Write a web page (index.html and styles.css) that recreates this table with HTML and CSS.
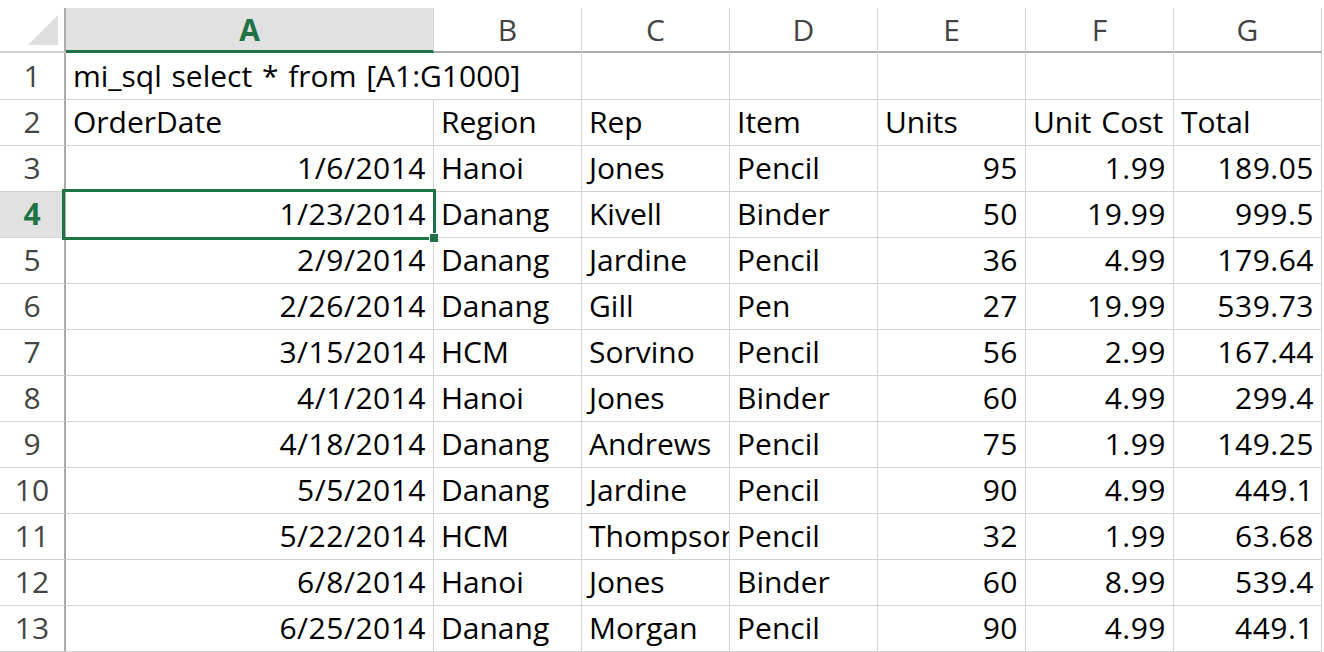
FILE: index.html
```html
<!DOCTYPE html>
<html>
<head>
<meta charset="utf-8">
<link rel="stylesheet" href="styles.css">
<title>Sheet</title>
</head>
<body>
<div class="sheet">
  <div class="corner"><svg class="tri" width="30" height="30" viewBox="0 0 30 30"><polygon points="30,0 30,30 0,30" fill="#dfdfdf"/></svg></div>
  <div class="ch sel-col">A</div>
  <div class="ch">B</div>
  <div class="ch">C</div>
  <div class="ch">D</div>
  <div class="ch">E</div>
  <div class="ch">F</div>
  <div class="ch">G</div>

  <div class="rh">1</div>
  <div class="c spill">mi_sql select * from [A1:G1000]</div>
  <div class="c"></div><div class="c"></div><div class="c"></div><div class="c"></div><div class="c"></div><div class="c"></div>

  <div class="rh">2</div>
  <div class="c">OrderDate</div><div class="c">Region</div><div class="c">Rep</div><div class="c">Item</div><div class="c">Units</div><div class="c">Unit Cost</div><div class="c">Total</div>

  <div class="rh">3</div>
  <div class="c r">1/6/2014</div><div class="c">Hanoi</div><div class="c">Jones</div><div class="c">Pencil</div><div class="c r">95</div><div class="c r">1.99</div><div class="c r">189.05</div>

  <div class="rh sel-row">4</div>
  <div class="c r active">1/23/2014<span class="selbox"></span><span class="handle"></span></div><div class="c">Danang</div><div class="c">Kivell</div><div class="c">Binder</div><div class="c r">50</div><div class="c r">19.99</div><div class="c r">999.5</div>

  <div class="rh">5</div>
  <div class="c r">2/9/2014</div><div class="c">Danang</div><div class="c">Jardine</div><div class="c">Pencil</div><div class="c r">36</div><div class="c r">4.99</div><div class="c r">179.64</div>

  <div class="rh">6</div>
  <div class="c r">2/26/2014</div><div class="c">Danang</div><div class="c">Gill</div><div class="c">Pen</div><div class="c r">27</div><div class="c r">19.99</div><div class="c r">539.73</div>

  <div class="rh">7</div>
  <div class="c r">3/15/2014</div><div class="c">HCM</div><div class="c">Sorvino</div><div class="c">Pencil</div><div class="c r">56</div><div class="c r">2.99</div><div class="c r">167.44</div>

  <div class="rh">8</div>
  <div class="c r">4/1/2014</div><div class="c">Hanoi</div><div class="c">Jones</div><div class="c">Binder</div><div class="c r">60</div><div class="c r">4.99</div><div class="c r">299.4</div>

  <div class="rh">9</div>
  <div class="c r">4/18/2014</div><div class="c">Danang</div><div class="c">Andrews</div><div class="c">Pencil</div><div class="c r">75</div><div class="c r">1.99</div><div class="c r">149.25</div>

  <div class="rh">10</div>
  <div class="c r">5/5/2014</div><div class="c">Danang</div><div class="c">Jardine</div><div class="c">Pencil</div><div class="c r">90</div><div class="c r">4.99</div><div class="c r">449.1</div>

  <div class="rh">11</div>
  <div class="c r">5/22/2014</div><div class="c">HCM</div><div class="c">Thompson</div><div class="c">Pencil</div><div class="c r">32</div><div class="c r">1.99</div><div class="c r">63.68</div>

  <div class="rh">12</div>
  <div class="c r">6/8/2014</div><div class="c">Hanoi</div><div class="c">Jones</div><div class="c">Binder</div><div class="c r">60</div><div class="c r">8.99</div><div class="c r">539.4</div>

  <div class="rh">13</div>
  <div class="c r">6/25/2014</div><div class="c">Danang</div><div class="c">Morgan</div><div class="c">Pencil</div><div class="c r">90</div><div class="c r">4.99</div><div class="c r">449.1</div>
</div>
</body>
</html>
```

FILE: styles.css
```css
html, body {
  margin: 0;
  padding: 0;
  background: #ffffff;
}
body {
  padding-top: 8px;
  font-family: "Open Sans", "Noto Sans", sans-serif;
  font-size: 30px;
  color: #000;
  overflow: hidden;
}
.sheet {
  display: grid;
  grid-template-columns: 66px 368px repeat(6, 148px);
  grid-template-rows: 45px 47px repeat(12, 46px);
  width: 1322px;
  word-spacing: 2px;
}
.sheet > div {
  box-sizing: border-box;
  white-space: nowrap;
  line-height: 30px;
}
.corner {
  border-right: 2px solid #ababab;
  border-bottom: 2px solid #d0d0d0;
  display: flex;
  justify-content: flex-end;
  align-items: flex-end;
  padding: 0 6px 6px 0;
}
.tri {
  display: block;
}
.ch {
  border-right: 1px solid #d4d4d4;
  border-bottom: 2px solid #ababab;
  display: flex;
  align-items: center;
  justify-content: center;
  color: #444;
  padding-top: 1px;
}
.ch.sel-col {
  background: #e1e1e1;
  border-bottom: 3px solid #217346;
  color: #217346;
  font-weight: bold;
  padding-top: 2px;
}
.rh {
  border-right: 2px solid #ababab;
  border-bottom: 1px solid #d4d4d4;
  display: flex;
  align-items: flex-end;
  justify-content: center;
  padding-bottom: 8px;
  color: #444;
}
.rh.sel-row {
  background: #e1e1e1;
  color: #217346;
  font-weight: bold;
}
.c {
  border-right: 1px solid #d4d4d4;
  border-bottom: 1px solid #d4d4d4;
  display: flex;
  align-items: flex-end;
  justify-content: flex-start;
  padding: 0 7px 8px 7px;
  overflow: hidden;
}
.c.r {
  justify-content: flex-end;
  letter-spacing: 0.5px;
}
.c.spill {
  overflow: visible;
  border-right-color: transparent;
  position: relative;
  z-index: 1;
}
.c.active {
  position: relative;
  overflow: visible;
}
.selbox {
  position: absolute;
  left: -4px;
  top: -3px;
  right: -3px;
  bottom: -3px;
  border: 3px solid #217346;
  pointer-events: none;
}
.handle {
  position: absolute;
  right: -6px;
  bottom: -6px;
  width: 8px;
  height: 8px;
  background: #217346;
  border: 1px solid #fff;
}
```
